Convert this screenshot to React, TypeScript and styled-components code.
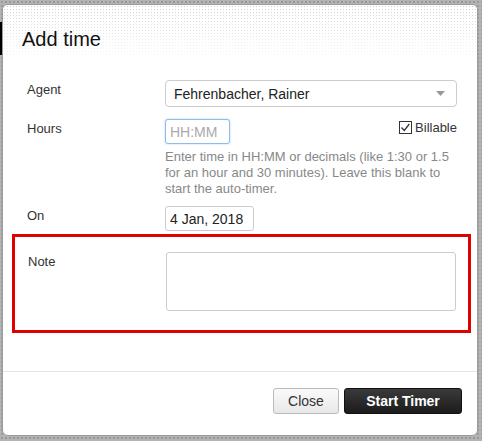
import styled, { createGlobalStyle } from 'styled-components'

const GlobalStyle = createGlobalStyle`
  html, body {
    margin: 0;
    padding: 0;
  }
  body {
    width: 482px;
    height: 441px;
    overflow: hidden;
    font-family: 'Liberation Sans', Arial, sans-serif;
    background-color: #b3b3b3;
    background-image: radial-gradient(#999 1px, transparent 1.2px);
    background-size: 4px 4px;
  }
`

export default function App() {
  return (
    <>
      <GlobalStyle />
      <StyledPage>
        <StyledEdgeShadow />
        <StyledModal>
          <StyledHeader>
            <h3>Add time</h3>
          </StyledHeader>
          <StyledBody>
            <StyledRow>
              <StyledLabel>Agent</StyledLabel>
              <StyledSelect>
                <span>Fehrenbacher, Rainer</span>
                <svg width='9' height='5' viewBox='0 0 9 5' aria-hidden='true'>
                  <path d='M0 0h9L4.5 5z' fill='#999' />
                </svg>
              </StyledSelect>
            </StyledRow>
            <StyledRow>
              <StyledLabel>Hours</StyledLabel>
              <div>
                <StyledHoursLine>
                  <StyledInput $width={65} $focused placeholder='HH:MM' readOnly />
                  <StyledCheck>
                    <svg width='13' height='13' viewBox='0 0 13 13' aria-hidden='true'>
                      <rect x='0.5' y='0.5' width='12' height='12' fill='#fff' stroke='#333' />
                      <path d='M2.5 6.5l2.8 3 5-6.5' fill='none' stroke='#333' strokeWidth='1.3' />
                    </svg>
                    Billable
                  </StyledCheck>
                </StyledHoursLine>
                <StyledHelp>
                  Enter time in HH:MM or decimals (like 1:30 or 1.5 for an hour and 30 minutes).
                  Leave this blank to start the auto-timer.
                </StyledHelp>
              </div>
            </StyledRow>
            <StyledRow>
              <StyledLabel>On</StyledLabel>
              <StyledInput $width={89} defaultValue='4 Jan, 2018' readOnly />
            </StyledRow>
            <StyledNoteRow>
              <StyledLabel>Note</StyledLabel>
              <StyledTextarea />
            </StyledNoteRow>
          </StyledBody>
          <StyledFooter>
            <StyledButton>Close</StyledButton>
            <StyledButton $primary>Start Timer</StyledButton>
          </StyledFooter>
        </StyledModal>
      </StyledPage>
    </>
  )
}

const StyledPage = styled.div`
  position: relative;
  padding: 4px 0 0 2px;
`

const StyledEdgeShadow = styled.div`
  position: absolute;
  left: 0;
  top: 22px;
  width: 2px;
  height: 33px;
  background: #000;
`

const StyledModal = styled.div`
  position: relative;
  width: 476px;
  height: 432px;
  box-sizing: border-box;
  border: 1px solid #9a9a9a;
  border-radius: 6px;
  background: #fff;
  display: flex;
  flex-direction: column;
  overflow: hidden;
`

const StyledHeader = styled.div`
  height: 59px;
  box-sizing: border-box;
  padding: 22px 19px 0;
  background-color: #fff;
  background-image: linear-gradient(
      to bottom,
      rgba(255, 255, 255, 0),
      rgba(255, 255, 255, 1) 100%
    ),
    radial-gradient(#cfcfcf 0.8px, transparent 1px);
  background-size: 100% 100%, 3px 3px;

  h3 {
    margin: 0;
    font-size: 20px;
    font-weight: 400;
    line-height: 24px;
    color: #111;
  }
`

const StyledBody = styled.div`
  flex: 1;
  padding-top: 16px;
  display: flex;
  flex-direction: column;
  border-bottom: 1px solid #e5e5e5;
`

const StyledRow = styled.div`
  display: grid;
  grid-template-columns: 138px 1fr;
  align-items: start;
  padding: 0 20px 0 24px;
  margin-bottom: 12px;

  &:nth-child(2) {
    margin-bottom: 9px;
  }
  &:nth-child(3) {
    margin-bottom: 3px;
  }
`

const StyledNoteRow = styled.div`
  display: grid;
  grid-template-columns: 138px 1fr;
  align-items: start;
  margin: 0 6px 0 9px;
  padding: 15px 12px 19px 13px;
  border: 3px solid #e00000;
`

const StyledLabel = styled.div`
  font-size: 13px;
  line-height: 16px;
  color: #333;
  padding-top: 2px;
`

const StyledSelect = styled.div`
  height: 27px;
  box-sizing: border-box;
  border: 1px solid #ccc;
  border-radius: 4px;
  padding: 0 11px 0 8px;
  display: flex;
  align-items: center;
  justify-content: space-between;
  font-size: 14px;
  color: #222;
`

const StyledHoursLine = styled.div`
  display: flex;
  justify-content: space-between;
  align-items: flex-start;
`

const StyledInput = styled.input<{ $width: number; $focused?: boolean }>`
  width: ${({ $width }) => $width}px;
  height: 25px;
  box-sizing: border-box;
  margin: 0;
  padding: 0 4px;
  font-family: 'Liberation Sans', Arial, sans-serif;
  font-size: 14px;
  color: #222;
  border: 1px solid ${({ $focused }) => ($focused ? '#8fbde6' : '#ccc')};
  border-radius: 3px;
  box-shadow: ${({ $focused }) =>
    $focused ? '0 0 2px rgba(82, 160, 230, 0.5)' : 'none'};
  outline: none;
  background: #fff;

  &::placeholder {
    color: #aaa;
  }
`

const StyledCheck = styled.label`
  display: flex;
  align-items: center;
  gap: 3px;
  padding-top: 1px;
  font-size: 13px;
  color: #333;
`

const StyledHelp = styled.p`
  margin: 5px 0 0;
  font-size: 13px;
  line-height: 16px;
  color: #888;
`

const StyledTextarea = styled.textarea`
  display: block;
  width: 100%;
  height: 59px;
  box-sizing: border-box;
  margin: 0;
  border: 1px solid #ccc;
  border-radius: 3px;
  resize: none;
  outline: none;
`

const StyledFooter = styled.div`
  height: 63px;
  box-sizing: border-box;
  padding: 16px 15px 0;
  display: flex;
  justify-content: flex-end;
  align-items: flex-start;
  gap: 5px;
`

const StyledButton = styled.button<{ $primary?: boolean }>`
  height: 26px;
  box-sizing: border-box;
  padding: 0 ${({ $primary }) => ($primary ? '21px' : '14px')};
  min-width: ${({ $primary }) => ($primary ? '118px' : '66px')};
  font-family: 'Liberation Sans', Arial, sans-serif;
  font-size: 14px;
  font-weight: ${({ $primary }) => ($primary ? 700 : 400)};
  color: ${({ $primary }) => ($primary ? '#fff' : '#333')};
  border: 1px solid ${({ $primary }) => ($primary ? '#111' : '#bbb')};
  border-radius: 3px;
  background: ${({ $primary }) =>
    $primary
      ? 'linear-gradient(to bottom, #3a3a3a, #1c1c1c)'
      : 'linear-gradient(to bottom, #fafafa, #e8e8e8)'};
`
